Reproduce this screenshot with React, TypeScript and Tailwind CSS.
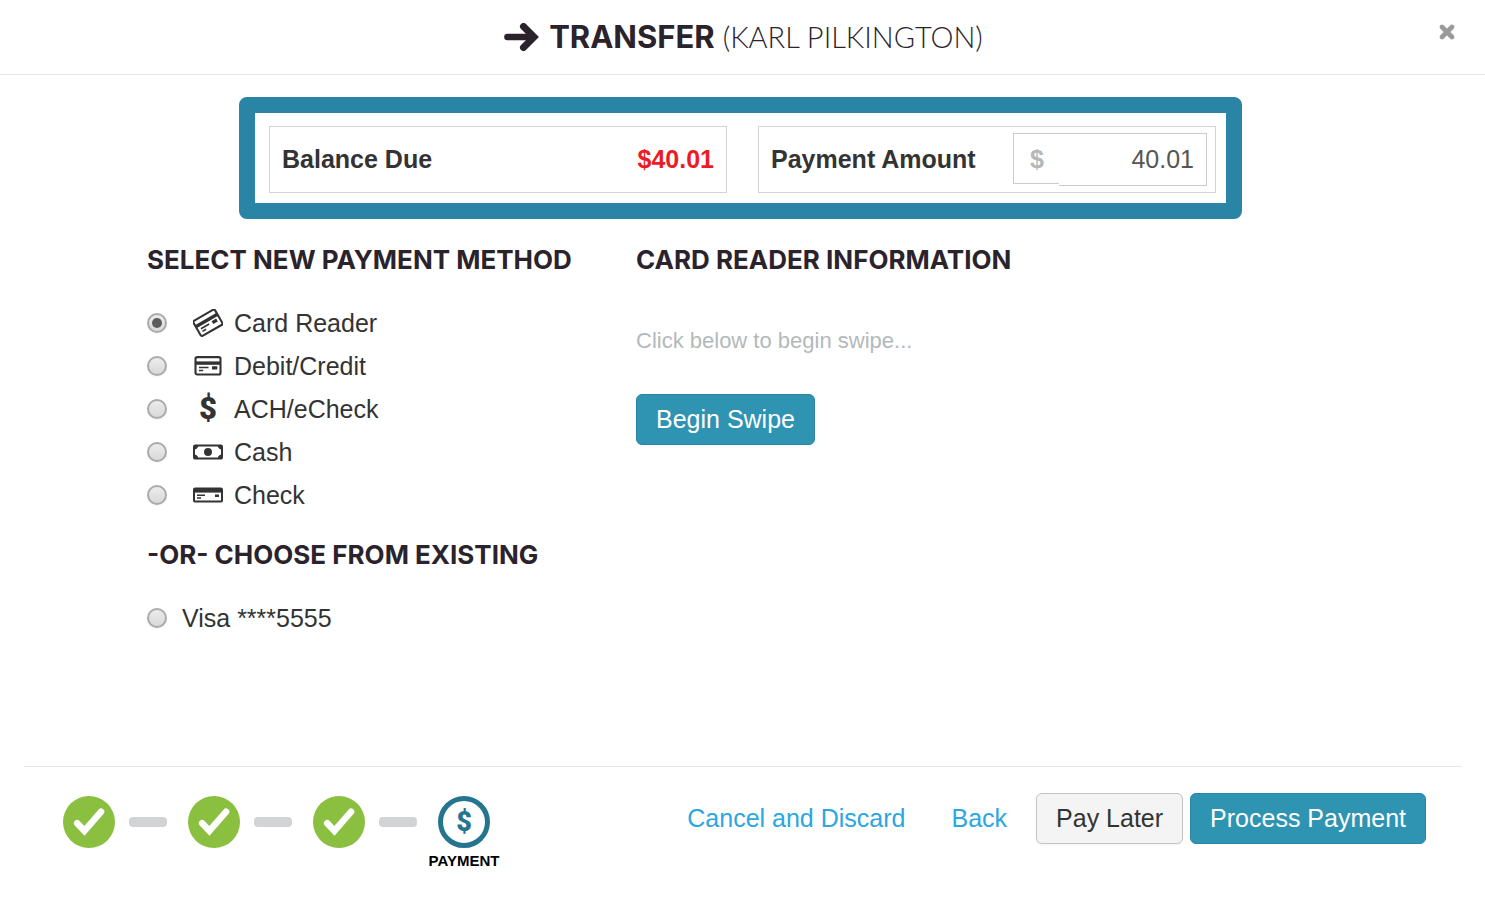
import React, { useState } from "react";

const CardIcon: React.FC<{ tilted?: boolean }> = ({ tilted }) => (
  <svg width="30" height="28" viewBox="0 0 30 28" fill="none" aria-hidden="true">
    <g transform={tilted ? "rotate(-30 15 14)" : undefined}>
      <rect x="2.5" y="5.1" width="25" height="17.4" rx="1.8" stroke="#333" strokeWidth="2.1" />
      <path d="M2.5 9.4h25v3.4h-25z" fill="#333" />
      <path d="M6 14.7h9.5v1.6H6zM6 17.7h4.2v1.6H6zM19 14.2h5.3v3.4H19z" fill="#333" />
    </g>
  </svg>
);

const CashIcon: React.FC = () => (
  <svg width="30" height="28" viewBox="0 0 30 28" fill="none" aria-hidden="true">
    <rect x="1" y="7.4" width="28" height="13.2" rx="1.2" stroke="#333" strokeWidth="2" />
    <circle cx="15" cy="14" r="4" fill="#333" />
    <path
      d="M1 7.5h4.2a4 4 0 0 1-4.2 4zM29 7.5h-4.2a4 4 0 0 0 4.2 4zM1 20.5h4.2a4 4 0 0 0-4.2-4zM29 20.5h-4.2a4 4 0 0 1 4.2-4z"
      fill="#333"
    />
  </svg>
);

const CheckIcon: React.FC = () => (
  <svg width="30" height="28" viewBox="0 0 30 28" fill="none" aria-hidden="true">
    <rect x="1" y="7.4" width="28" height="13.2" rx="1.2" stroke="#333" strokeWidth="2" />
    <path d="M1 7.4h28v4.2H1z" fill="#333" />
    <path d="M4 13.6h8V15H4zM4 16.3h4v1.4H4zM22 13.5h4V16h-4z" fill="#333" />
  </svg>
);

const DollarIcon: React.FC = () => (
  <span aria-hidden="true" className="font-['Roboto',sans-serif] text-[31px] leading-7 font-black">
    $
  </span>
);

const methods = [
  { id: "reader", label: "Card Reader", icon: <CardIcon tilted /> },
  { id: "card", label: "Debit/Credit", icon: <CardIcon /> },
  { id: "ach", label: "ACH/eCheck", icon: <DollarIcon /> },
  { id: "cash", label: "Cash", icon: <CashIcon /> },
  { id: "check", label: "Check", icon: <CheckIcon /> },
];

const Heading: React.FC<{ children: React.ReactNode }> = ({ children }) => (
  <h2 className="font-['Inter',sans-serif] text-[26px] leading-10 font-bold text-[#2b232c] uppercase whitespace-nowrap">
    {children}
  </h2>
);

type OptionProps = {
  id: string;
  label: string;
  icon?: React.ReactNode;
  checked: boolean;
  onSelect: (id: string) => void;
};

const Option: React.FC<OptionProps> = ({ id, label, icon, checked, onSelect }) => (
  <li className="flex h-[43px] items-center gap-[15px]">
    <input
      id={id}
      type="radio"
      name="method"
      checked={checked}
      onChange={() => onSelect(id)}
      className="grid size-5 shrink-0 appearance-none place-items-center rounded-full border-2 border-[#aaa] bg-linear-to-b from-[#ececec] to-[#d9d9d9] shadow-xs checked:before:size-[10px] checked:before:rounded-full checked:before:bg-[#5c5c5c]"
    />
    <label htmlFor={id} className="flex items-center">
      {icon && <span className="mr-[11px] ml-[11px] flex w-[30px] justify-center">{icon}</span>}
      {label}
    </label>
  </li>
);

const DoneStep: React.FC = () => (
  <>
    <li className="mr-[14px]">
      <svg width="52" height="52" viewBox="0 0 52 52" fill="none" role="img" aria-label="Step complete">
        <circle cx="26" cy="26" r="26" fill="#8abf3f" />
        <path d="M14.2 27.2l7.2 7.6L38 15.8" stroke="#fff" strokeWidth="6.6" strokeLinecap="round" />
      </svg>
    </li>
    <li aria-hidden="true" className="mt-[21px] mr-[21px] h-[10px] w-[38px] rounded bg-[#d1d3d4]" />
  </>
);

const App: React.FC = () => {
  const [method, setMethod] = useState("reader");
  const [amount, setAmount] = useState("40.01");

  return (
    <div className="flex min-h-screen flex-col bg-white font-['Liberation_Sans',Arial,sans-serif] text-[25px] leading-[30px] text-[#333]">
      <header className="grid grid-cols-[1fr_auto_1fr] border-b border-[#e5e5e5] pr-[30px] pl-8">
        <h1 className="col-start-2 flex h-[74px] items-center font-['Inter',sans-serif] text-[#2b232c]">
          <svg width="35" height="28" viewBox="0 0 35 28" fill="none" className="mr-[10px]" aria-hidden="true">
            <path d="M3.5 14H28" stroke="#2b232c" strokeWidth="6.6" strokeLinecap="round" />
            <path d="M19.5 3.5L30 14L19.5 24.5" stroke="#2b232c" strokeWidth="7" strokeLinecap="round" />
          </svg>
          <span className="text-[31px] font-bold">TRANSFER</span>
          <span className="ml-2 font-['Lato',sans-serif] text-[29px] font-light">(KARL PILKINGTON)</span>
        </h1>
        <button type="button" aria-label="Close" className="mt-6 size-4 justify-self-end">
          <svg width="16" height="16" viewBox="0 0 16 16" fill="none">
            <path d="M3 3l10 10M13 3L3 13" stroke="#999" strokeWidth="4.6" strokeLinecap="round" />
          </svg>
        </button>
      </header>

      <main className="mx-auto w-full max-w-[1191px] flex-1 pt-[22px] pr-1">
        <section className="mx-auto grid max-w-[1003px] grid-cols-2 gap-[31px] rounded-lg border-16 border-[#2a84a5] pt-[13px] pr-[10px] pb-[10px] pl-[14px] font-bold">
          <div className="flex items-center justify-between border border-[#d1d3d4] px-3 pb-0.5">
            <span>Balance Due</span>
            <span className="text-[#ed1c24]">$40.01</span>
          </div>
          <div className="flex items-start justify-between border border-[#d1d3d4] py-[6px] pr-2 pl-3">
            <label htmlFor="amount" className="self-center pb-0.5">
              Payment Amount
            </label>
            <div className="flex items-start">
              <span className="flex h-[51px] w-[46px] items-center border border-r-0 border-[#ccc] pl-4 text-[#b3b9bb]">
                $
              </span>
              <input
                id="amount"
                type="text"
                value={amount}
                onChange={(e) => setAmount(e.target.value)}
                className="h-[53px] w-[148px] border border-l-0 border-[#ccc] pr-3 text-right font-normal text-[#555]"
              />
            </div>
          </div>
        </section>

        <div className="mt-[21px] grid grid-cols-[489px_1fr]">
          <section>
            <Heading>Select New Payment Method</Heading>
            <ul className="mt-[21px] mb-[19px]">
              {methods.map((m) => (
                <Option key={m.id} {...m} checked={method === m.id} onSelect={setMethod} />
              ))}
            </ul>
            <Heading>-Or- Choose From Existing</Heading>
            <ul className="mt-[21px]">
              <Option id="visa" label="Visa ****5555" checked={method === "visa"} onSelect={setMethod} />
            </ul>
          </section>
          <section>
            <Heading>Card Reader Information</Heading>
            <p className="mt-[46px] text-[22px] text-[#b3b9bb]">Click below to begin swipe...</p>
            <button
              type="button"
              className="mt-[38px] h-[51px] rounded-md border border-[#2a84a5] bg-[#2f93b2] px-[19px] pb-0.5 text-white"
            >
              Begin Swipe
            </button>
          </section>
        </div>
      </main>

      <footer className="mx-6 flex h-[150px] items-start justify-between border-t border-[#e5e5e5] pr-[35px] pl-[39px]">
        <ol className="mt-[29px] flex">
          <DoneStep />
          <DoneStep />
          <DoneStep />
          <li className="flex w-[52px] flex-col items-center">
            <span
              aria-hidden="true"
              className="flex size-[52px] shrink-0 items-center justify-center rounded-full border-5 border-[#26758f] font-['Roboto',sans-serif] text-[27px] font-black text-[#26758f]"
            >
              $
            </span>
            <span className="mt-[3px] text-[15px] leading-5 font-bold text-black">PAYMENT</span>
          </li>
        </ol>
        <div className="mt-[26px] flex items-center">
          <a href="#" className="mr-[46px] pb-0.5 text-[#2ba6df]">
            Cancel and Discard
          </a>
          <a href="#" className="mr-[29px] pb-0.5 text-[#2ba6df]">
            Back
          </a>
          <button
            type="button"
            className="mr-[7px] h-[51px] rounded-md border border-[#c4c4c4] bg-[#f4f4f4] px-[19px] pb-0.5 shadow-xs"
          >
            Pay Later
          </button>
          <button
            type="button"
            className="h-[51px] rounded-md border border-[#2a84a5] bg-[#2f93b2] px-[19px] pb-0.5 text-white"
          >
            Process Payment
          </button>
        </div>
      </footer>
    </div>
  );
};

export default App;
